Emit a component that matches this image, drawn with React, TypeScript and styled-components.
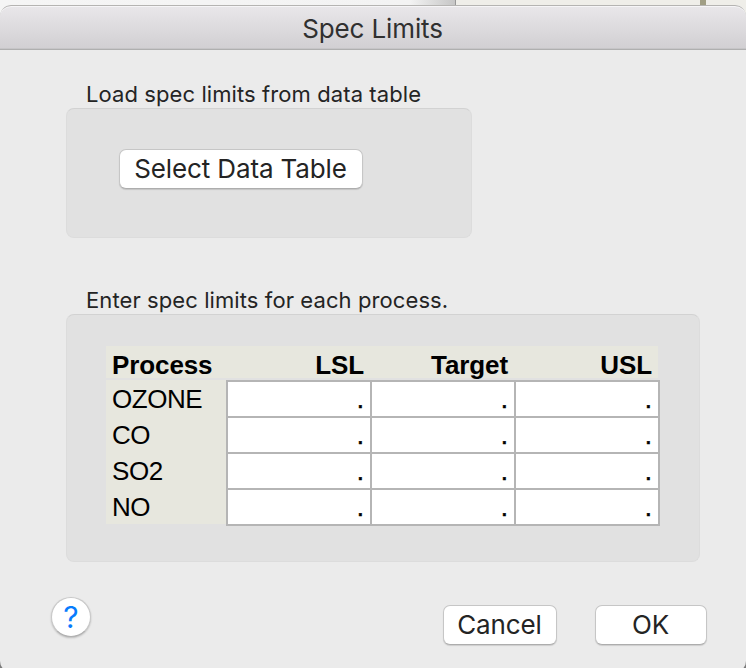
import React from "react";
import styled, { createGlobalStyle } from "styled-components";

const GlobalStyle = createGlobalStyle`
  html, body { margin: 0; padding: 0; background: #f0efec; overflow: hidden; }
  *, *::before, *::after { box-sizing: border-box; }
`;

const Screen = styled.div`
  width: 746px;
  height: 668px;
  overflow: hidden;
  background: #7b7b7b;
  font-family: Inter, "Liberation Sans", sans-serif;
  color: #242424;
`;

const Backdrop = styled.div`
  display: flex;
  height: 20px;
  margin-bottom: -15px;
  background: #efeee9;
`;

const BackdropLeft = styled.div`
  width: 456px;
  border-right: 1px solid #989898;
  background: linear-gradient(90deg, #f5f5f5 0, #f3f3f3 410px, #c6c6c6 455px);
`;

const BackdropMark = styled.div`
  width: 6px;
  margin-left: 244px;
  background: #a09e84;
`;

const Dialog = styled.div`
  position: relative;
  display: flex;
  flex-direction: column;
  height: 667px;
  border-radius: 11px;
  background: #ebebeb;
  overflow: hidden;
`;

const TitleBar = styled.header`
  display: flex;
  flex: none;
  justify-content: center;
  height: 45px;
  border-top: 1px solid #b5b4b2;
  border-bottom: 1px solid #afafaf;
  border-radius: 11px 11px 0 0;
  background: linear-gradient(#e9e7ea, #d1cfd2);
  box-shadow: inset 0 1px #f6f5f7, inset 0 -1px #c6c5c7;
`;

const Title = styled.h1`
  margin: 0;
  padding: 7px 1px 0 0;
  font-size: 26px;
  line-height: 32px;
  font-weight: 400;
  letter-spacing: -0.12px;
  color: #303030;
`;

const Section = styled.section<{ $gap: number }>`
  margin: ${(p) => p.$gap}px 0 0 66px;
`;

const Caption = styled.div`
  height: 28px;
  padding-left: 20px;
  font-size: 22px;
  line-height: 28px;
  white-space: nowrap;
  letter-spacing: 0.09px;
`;

const Panel = styled.div<{ $width: number; $height: number; $pad: string }>`
  width: ${(p) => p.$width}px;
  height: ${(p) => p.$height}px;
  padding: ${(p) => p.$pad};
  border: 1px solid #dcdcdc;
  border-top-color: #d2d2d2;
  border-radius: 8px;
  background: #e1e1e1;
`;

const Button = styled.button<{ $width: number }>`
  width: ${(p) => p.$width}px;
  height: 40px;
  padding: 0 1px 0 0;
  border: 1px solid #c6c6c6;
  border-bottom-color: #adadad;
  border-radius: 7px;
  background: #fff;
  box-shadow: 0 1px 1px rgba(0, 0, 0, 0.13);
  font-family: inherit;
  font-size: 26px;
  line-height: 38px;
  color: #242424;
  white-space: nowrap;
  letter-spacing: -0.12px;
`;

const Table = styled.div`
  width: 554px;
  font-family: "Liberation Sans", Arial, sans-serif;
  font-size: 26px;
  color: #000;
`;

const HeaderRow = styled.div`
  display: grid;
  grid-template-columns: 114px 144px 144px 144px;
  width: 552px;
  height: 32px;
  margin-bottom: 2px;
  padding-left: 6px;
  background: #e7e7de;
  font-weight: 700;
  line-height: 38px;
  letter-spacing: -0.1px;
`;

const HeaderCell = styled.div<{ $right?: boolean }>`
  text-align: ${(p) => (p.$right ? "right" : "left")};
  padding-right: ${(p) => (p.$right ? 6 : 0)}px;
`;

const TableBody = styled.div`
  display: flex;
  align-items: flex-start;
`;

const Names = styled.div`
  width: 120px;
  background: #e7e7de;
`;

const Name = styled.div`
  height: 36px;
  padding-left: 6px;
  line-height: 38px;
  letter-spacing: -0.45px;
`;

const Inputs = styled.div`
  display: grid;
  grid-template-columns: repeat(3, 142px);
  grid-auto-rows: 34px;
  gap: 2px;
  padding: 2px;
  background: #b5b5b5;
`;

const InputCell = styled.div`
  padding-right: 6px;
  background: #fff;
  line-height: 34px;
  text-align: right;
  -webkit-text-stroke: 0.5px #000;
`;

const Footer = styled.footer`
  display: flex;
  align-items: flex-start;
  margin-top: 35px;
  padding-left: 51px;
`;

const HelpButton = styled.button`
  width: 40px;
  height: 40px;
  padding: 0;
  border: 1px solid #c8c8c8;
  border-bottom-color: #b0b0b0;
  border-radius: 50%;
  background: #fff;
  box-shadow: 0 1px 2px rgba(0, 0, 0, 0.22);
  font-family: inherit;
  font-size: 30px;
  line-height: 38px;
  color: #087cfd;
`;

const Actions = styled.div`
  display: flex;
  gap: 38px;
  margin: 8px 0 0 352px;
`;

const processes = ["OZONE", "CO", "SO2", "NO"];
const limits = ["LSL", "Target", "USL"];

export default function App() {
  return (
    <Screen>
      <GlobalStyle />
      <Backdrop>
        <BackdropLeft />
        <BackdropMark />
      </Backdrop>
      <Dialog>
        <TitleBar>
          <Title>Spec Limits</Title>
        </TitleBar>
        <Section $gap={30}>
          <Caption>Load spec limits from data table</Caption>
          <Panel $width={406} $height={130} $pad="40px 52px">
            <Button $width={244}>Select Data Table</Button>
          </Panel>
        </Section>
        <Section $gap={48}>
          <Caption>Enter spec limits for each process.</Caption>
          <Panel $width={634} $height={248} $pad="31px 39px">
            <Table>
              <HeaderRow>
                <HeaderCell>Process</HeaderCell>
                {limits.map((limit) => (
                  <HeaderCell key={limit} $right>{limit}</HeaderCell>
                ))}
              </HeaderRow>
              <TableBody>
                <Names>
                  {processes.map((process) => (
                    <Name key={process}>{process}</Name>
                  ))}
                </Names>
                <Inputs>
                  {processes.flatMap((process) =>
                    limits.map((limit) => <InputCell key={process + limit}>.</InputCell>)
                  )}
                </Inputs>
              </TableBody>
            </Table>
          </Panel>
        </Section>
        <Footer>
          <HelpButton>?</HelpButton>
          <Actions>
            <Button $width={114}>Cancel</Button>
            <Button $width={112}>OK</Button>
          </Actions>
        </Footer>
      </Dialog>
    </Screen>
  );
}
